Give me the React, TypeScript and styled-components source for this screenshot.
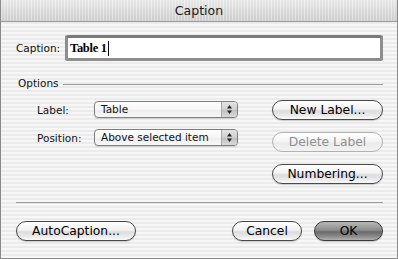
import React from "react";
import styled, { createGlobalStyle, css } from "styled-components";

const Global = createGlobalStyle`
  html, body { margin: 0; padding: 0; background: #fff; }
  #root { width: 398px; height: 259px; }
`;

const Window = styled.div`
  width: 398px;
  height: 259px;
  box-sizing: border-box;
  border-left: 1px solid #8a8a8a;
  border-right: 1px solid #8a8a8a;
  border-bottom: 1px solid #8a8a8a;
  display: flex;
  flex-direction: column;
  font-family: "DejaVu Sans", Verdana, sans-serif;
  color: #111;
  background: repeating-linear-gradient(
    to bottom,
    #f7f7f7 0px,
    #f7f7f7 2px,
    #ebebeb 2px,
    #ebebeb 4px
  );
`;

const TitleBar = styled.div`
  height: 21px;
  border-bottom: 1px solid #9a9a9a;
  display: flex;
  align-items: center;
  justify-content: center;
  font-size: 12.5px;
  color: #1a1a1a;
  background:
    repeating-linear-gradient(to right, rgba(255,255,255,0.25) 0px, rgba(255,255,255,0.25) 1px, rgba(0,0,0,0.02) 1px, rgba(0,0,0,0.02) 3px),
    linear-gradient(to bottom, #ececec 0%, #dedede 50%, #d2d2d2 100%);
`;

const Body = styled.div`
  flex: 1;
  display: flex;
  flex-direction: column;
  padding: 0 14px 0 15px;
`;

const CaptionRow = styled.div`
  display: flex;
  align-items: center;
  margin-top: 13px;
  height: 26px;
`;

const Label = styled.span<{ $width?: number }>`
  font-size: 10.5px;
  color: #111;
  width: ${(p) => (p.$width ? `${p.$width}px` : "auto")};
  flex-shrink: 0;
`;

const TextField = styled.div`
  flex: 1;
  height: 26px;
  box-sizing: border-box;
  border: 3px solid #8e8e8e;
  border-top-color: #7a7a7a;
  border-radius: 3px;
  background: #fff;
  display: flex;
  align-items: center;
  padding-left: 2px;
  font-family: "Liberation Serif", "Times New Roman", serif;
  font-weight: bold;
  font-size: 12.5px;
  letter-spacing: -0.3px;
  color: #000;
`;

const Cursor = styled.span`
  display: inline-block;
  width: 1px;
  height: 15px;
  background: #000;
  margin-left: 1px;
`;

const GroupHeader = styled.div`
  display: flex;
  align-items: center;
  margin-top: 15px;
  height: 14px;
`;

const GroupTitle = styled.span`
  font-size: 10.5px;
  padding-left: 2px;
  margin-right: 4px;
`;

const Rule = styled.div`
  flex: 1;
  height: 1px;
  background: #9a9a9a;
  margin-top: 3px;
`;

const Options = styled.div`
  display: flex;
  justify-content: space-between;
  margin-top: 10px;
`;

const FieldColumn = styled.div`
  display: flex;
  flex-direction: column;
  gap: 11px;
  padding-left: 21px;
  padding-top: 1px;
`;

const FieldRow = styled.div`
  display: flex;
  align-items: center;
  height: 17px;
`;

const Popup = styled.div`
  width: 144px;
  height: 17px;
  box-sizing: border-box;
  border: 1px solid #7e7e7e;
  border-radius: 4px;
  display: flex;
  overflow: hidden;
  background: linear-gradient(to bottom, #ffffff 0%, #f6f6f6 50%, #ececec 51%, #f8f8f8 100%);
  box-shadow: 0 1px 1px rgba(0,0,0,0.12);
`;

const PopupValue = styled.span`
  flex: 1;
  font-size: 10.5px;
  padding-left: 6px;
  line-height: 14px;
  color: #111;
`;

const PopupArrows = styled.div`
  width: 15px;
  border-left: 1px solid #a8a8a8;
  display: flex;
  align-items: center;
  justify-content: center;
  background: linear-gradient(to bottom, #e4e4e4 0%, #cfcfcf 50%, #bdbdbd 51%, #dadada 100%);
`;

const ButtonColumn = styled.div`
  display: flex;
  flex-direction: column;
  gap: 12px;
`;

const Button = styled.button<{ $w: number; $default?: boolean }>`
  width: ${(p) => p.$w}px;
  height: 20px;
  box-sizing: border-box;
  border-radius: 10px;
  border: 1px solid #4a4a4a;
  font-family: "DejaVu Sans", Verdana, sans-serif;
  font-size: 12.3px;
  color: #000;
  padding: 0;
  display: flex;
  align-items: center;
  justify-content: center;
  background: linear-gradient(to bottom, #ffffff 0%, #f2f2f2 45%, #dcdcdc 55%, #eaeaea 80%, #fafafa 100%);
  box-shadow: 0 1px 1px rgba(0,0,0,0.18);
  ${(p) =>
    p.$default &&
    css`
      border-color: #3a3a3a;
      background: linear-gradient(to bottom, #b8b8b8 0%, #8c8c8c 45%, #6a6a6a 55%, #8a8a8a 80%, #b0b0b0 100%);
    `}
  &:disabled {
    border-color: #b2b2b2;
    color: #8f8f8f;
    box-shadow: none;
    background: linear-gradient(to bottom, #ffffff 0%, #f6f6f6 45%, #ebebeb 55%, #f2f2f2 100%);
  }
`;

const Separator = styled.div`
  height: 1px;
  background: #9a9a9a;
  margin-top: 18px;
`;

const Footer = styled.div`
  display: flex;
  align-items: center;
  margin-top: 18px;
`;

const Spacer = styled.div`
  flex: 1;
`;

const FooterGap = styled.div`
  width: 12px;
`;

const Arrows = () => (
  <svg width="7" height="11" viewBox="0 0 7 11">
    <path d="M3.5 1 L6 4.5 L1 4.5 Z" fill="#222" />
    <path d="M3.5 10 L6 6.5 L1 6.5 Z" fill="#222" />
  </svg>
);

export default function App() {
  return (
    <>
      <Global />
      <Window>
        <TitleBar>Caption</TitleBar>
        <Body>
          <CaptionRow>
            <Label $width={49}>Caption:</Label>
            <TextField>
              Table 1<Cursor />
            </TextField>
          </CaptionRow>

          <GroupHeader>
            <GroupTitle>Options</GroupTitle>
            <Rule />
          </GroupHeader>

          <Options>
            <FieldColumn>
              <FieldRow>
                <Label $width={57}>Label:</Label>
                <Popup>
                  <PopupValue>Table</PopupValue>
                  <PopupArrows>
                    <Arrows />
                  </PopupArrows>
                </Popup>
              </FieldRow>
              <FieldRow>
                <Label $width={57}>Position:</Label>
                <Popup>
                  <PopupValue>Above selected item</PopupValue>
                  <PopupArrows>
                    <Arrows />
                  </PopupArrows>
                </Popup>
              </FieldRow>
            </FieldColumn>
            <ButtonColumn>
              <Button $w={111}>New Label...</Button>
              <Button $w={111} disabled>
                Delete Label
              </Button>
              <Button $w={111}>Numbering...</Button>
            </ButtonColumn>
          </Options>

          <Separator />

          <Footer>
            <Button $w={120}>AutoCaption...</Button>
            <Spacer />
            <Button $w={70}>Cancel</Button>
            <FooterGap />
            <Button $w={69} $default>
              OK
            </Button>
          </Footer>
        </Body>
      </Window>
    </>
  );
}
